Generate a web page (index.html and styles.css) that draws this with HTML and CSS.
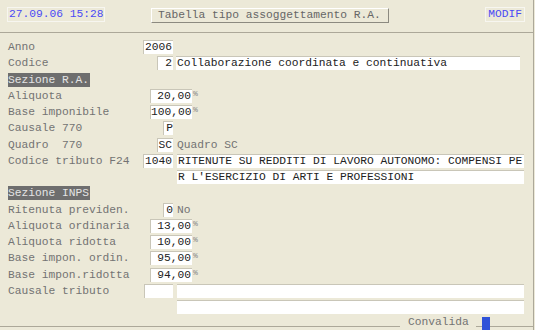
FILE: index.html
```html
<!DOCTYPE html>
<html lang="it">
<head>
    <meta charset="UTF-8">
    <title>Tabella tipo assoggettamento R.A.</title>
    <link rel="stylesheet" href="styles.css">
</head>
<body>
    <div class="screen">
        <div class="topbar">
            <div class="date-box">27.09.06 15:28</div>
            <div class="title-button">Tabella tipo assoggettamento R.A.</div>
            <div class="mode-box">MODIF</div>
        </div>

        <div class="form">
            <div class="row">
                <span class="label">Anno</span>
                <div class="cell"><span class="box w-30">2006</span></div>
            </div>
            <div class="row">
                <span class="label">Codice</span>
                <div class="cell"><span class="box w-15">2</span></div>
                <span class="box desc desc-short">Collaborazione coordinata e continuativa</span>
            </div>
            <div class="row">
                <span class="section">Sezione R.A.</span>
            </div>
            <div class="row">
                <span class="label">Aliquota</span>
                <div class="cell-pct"><span class="box w-42">20,00</span><span class="pct">%</span></div>
            </div>
            <div class="row">
                <span class="label">Base imponibile</span>
                <div class="cell-pct"><span class="box w-42">100,00</span><span class="pct">%</span></div>
            </div>
            <div class="row">
                <span class="label">Causale 770</span>
                <div class="cell"><span class="box w-9">P</span></div>
            </div>
            <div class="row">
                <span class="label">Quadro  770</span>
                <div class="cell"><span class="box w-15">SC</span></div>
                <span class="note">Quadro SC</span>
            </div>
            <div class="row">
                <span class="label">Codice tributo F24</span>
                <div class="cell"><span class="box w-30">1040</span></div>
                <span class="box desc">RITENUTE SU REDDITI DI LAVORO AUTONOMO: COMPENSI PE</span>
            </div>
            <div class="row">
                <span class="label"></span>
                <div class="cell"></div>
                <span class="box desc">R L'ESERCIZIO DI ARTI E PROFESSIONI</span>
            </div>
            <div class="row">
                <span class="section">Sezione INPS</span>
            </div>
            <div class="row">
                <span class="label">Ritenuta previden.</span>
                <div class="cell"><span class="box w-9">0</span></div>
                <span class="note">No</span>
            </div>
            <div class="row">
                <span class="label">Aliquota ordinaria</span>
                <div class="cell-pct"><span class="box w-42">13,00</span><span class="pct">%</span></div>
            </div>
            <div class="row">
                <span class="label">Aliquota ridotta</span>
                <div class="cell-pct"><span class="box w-42">10,00</span><span class="pct">%</span></div>
            </div>
            <div class="row">
                <span class="label">Base impon. ordin.</span>
                <div class="cell-pct"><span class="box w-42">95,00</span><span class="pct">%</span></div>
            </div>
            <div class="row">
                <span class="label">Base impon.ridotta</span>
                <div class="cell-pct"><span class="box w-42">94,00</span><span class="pct">%</span></div>
            </div>
            <div class="row">
                <span class="label">Causale tributo</span>
                <div class="cell"><span class="box w-29"></span></div>
                <span class="box desc"></span>
            </div>
            <div class="row">
                <span class="label"></span>
                <div class="cell"></div>
                <span class="box desc"></span>
            </div>
        </div>

        <div class="footer">
            <div class="rule rule-left"></div>
            <span class="footer-text">Convalida</span>
            <div class="rule rule-short"></div>
            <div class="status-square"></div>
            <div class="rule rule-right"></div>
        </div>
    </div>
</body>
</html>
```

FILE: styles.css
```css
* {
    margin: 0;
    padding: 0;
    box-sizing: border-box;
}

body {
    background-color: #ece9d8;
    font-family: "Liberation Mono", "Courier New", monospace;
    font-size: 11.25px;
    color: #333;
    width: 535px;
    height: 330px;
    overflow: hidden;
}

.screen {
    width: 534px;
    height: 330px;
    border-right: 1px solid #aca899;
}

.topbar {
    display: flex;
    align-items: flex-start;
    height: 33px;
    padding: 7px 0 0 7px;
    border-bottom: 1px solid #aca899;
}

.date-box {
    width: 98px;
    height: 15px;
    line-height: 13px;
    padding-left: 1px;
    border: 1px solid #f7f6f0;
    color: #4a4af5;
}

.title-button {
    width: 238px;
    height: 15px;
    line-height: 13px;
    margin: 1px 0 0 46px;
    padding-left: 6px;
    border: 1px solid #fff;
    border-right-color: #8c8a80;
    border-bottom-color: #8c8a80;
    color: #666;
}

.mode-box {
    height: 15px;
    line-height: 13px;
    margin-left: auto;
    margin-right: 8px;
    padding: 0 2px;
    border: 1px solid #f7f6f0;
    color: #4a4af5;
}

.form {
    padding: 6px 0 0 8px;
    height: 283px;
}

.row {
    display: flex;
    align-items: center;
    height: 16.25px;
}

.label {
    width: 135px;
    color: #737373;
    white-space: pre;
}

.cell {
    width: 30px;
    display: flex;
    justify-content: flex-end;
}

.cell-pct {
    display: flex;
    align-items: flex-start;
    padding-left: 7px;
}

.box {
    display: block;
    height: 14px;
    line-height: 13px;
    background-color: #fff;
    border-top: 1px solid #c9c6b8;
    border-left: 1px solid #c9c6b8;
    text-align: right;
    white-space: pre;
    overflow: hidden;
    color: #222;
}

.w-9 { width: 10px; }
.w-15 { width: 16px; padding-right: 1px; }
.w-29 { width: 29px; }
.w-30 { width: 30px; padding-right: 1px; }
.w-42 { width: 42px; padding-right: 1px; }

.pct {
    font-size: 8px;
    line-height: 10px;
    color: #888;
    margin-left: 1px;
}

.desc {
    width: 347px;
    margin-left: 4px;
    padding-left: 1px;
    text-align: left;
    border-left: none;
}

.desc-short {
    width: 344px;
    margin-left: 3px;
}

.note {
    margin-left: 4px;
    color: #737373;
}

.section {
    height: 14px;
    line-height: 14px;
    padding-right: 1px;
    background-color: #6e6e6e;
    color: #e4e4e4;
}

.footer {
    display: flex;
    height: 14px;
}

.rule {
    height: 4px;
    margin-top: 10px;
    border-top: 1px solid #aca899;
}

.rule-left {
    width: 400px;
}

.footer-text {
    margin-left: 8px;
    line-height: 13px;
    color: #737373;
}

.rule-short {
    width: 6px;
    margin-left: 7px;
}

.status-square {
    width: 8px;
    height: 13px;
    margin-top: 1px;
    background-color: #2f52d8;
}

.rule-right {
    flex: 1;
}
```
